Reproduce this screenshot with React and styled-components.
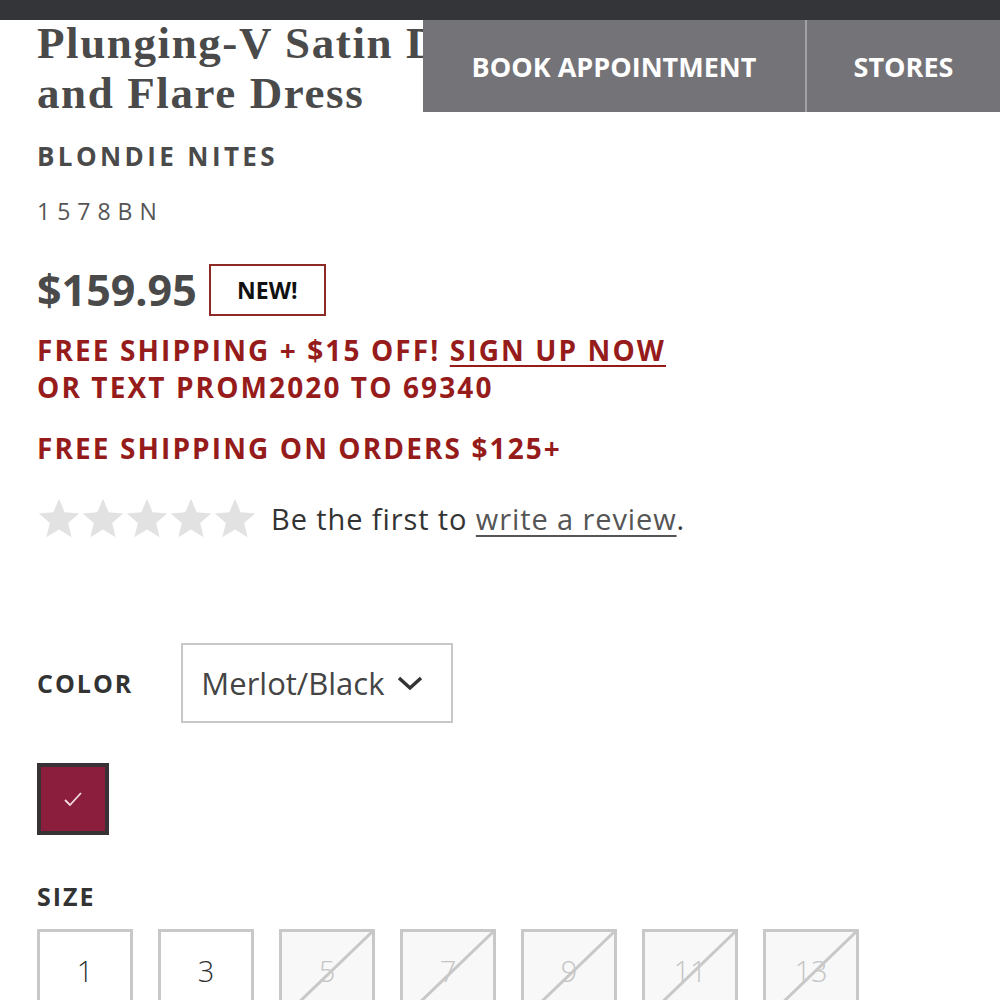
import React from 'react';
import styled, { createGlobalStyle } from 'styled-components';

const GlobalStyle = createGlobalStyle`
    html, body {
        margin: 0;
        padding: 0;
        background: #fff;
        font-family: "Open Sans", "Liberation Sans", sans-serif;
    }
    * { box-sizing: border-box; }
`;

const Page = styled.div`
    position: relative;
    width: 1000px;
    height: 1000px;
    overflow: hidden;
`;

const TopBar = styled.div`
    height: 20px;
    background: #343538;
`;

const Nav = styled.nav`
    position: absolute;
    top: 20px;
    right: 0;
    width: 577px;
    height: 92px;
    display: flex;
    background: #747378;
`;

const NavItem = styled.a`
    display: flex;
    align-items: center;
    justify-content: center;
    width: ${(p) => p.width}px;
    color: #fff;
    font-weight: 700;
    font-size: 27px;
    text-decoration: none;
    & + & {
        border-left: 2px solid #a2a1a6;
    }
`;

const Content = styled.main`
    padding: 0 37px;
`;

const Title = styled.h1`
    margin: -2px 0 0;
    font-family: "Liberation Serif", "Times New Roman", serif;
    font-weight: 700;
    font-size: 45px;
    line-height: 50px;
    color: #4a4a4a;
    letter-spacing: 1.6px;
`;

const Brand = styled.div`
    margin-top: 20px;
    font-weight: 700;
    font-size: 26px;
    letter-spacing: 3.4px;
    color: #4a4a4a;
`;

const Sku = styled.div`
    margin-top: 21px;
    font-size: 23px;
    letter-spacing: 7px;
    color: #555;
`;

const PriceRow = styled.div`
    display: flex;
    align-items: center;
    gap: 12px;
    margin-top: 33px;
`;

const Price = styled.span`
    font-weight: 700;
    font-size: 43px;
    color: #4a4a4a;
`;

const Badge = styled.span`
    display: flex;
    align-items: center;
    justify-content: center;
    width: 117px;
    height: 52px;
    border: 2px solid #8e2a26;
    font-weight: 700;
    font-size: 23px;
    color: #111;
`;

const Promo = styled.p`
    margin: ${(p) => p.top}px 0 0;
    font-weight: 700;
    font-size: 28px;
    line-height: 37px;
    letter-spacing: 2.1px;
    color: #961b1b;

    a {
        color: inherit;
        text-decoration: underline;
        text-underline-offset: 4px;
        text-decoration-thickness: 2px;
    }
`;

const ReviewRow = styled.div`
    display: flex;
    align-items: center;
    gap: 14px;
    margin-top: 29px;
`;

const Stars = styled.div`
    display: flex;
`;

const ReviewText = styled.span`
    font-size: 29px;
    letter-spacing: 0.9px;
    color: #333;

    a {
        color: #555;
        text-decoration: underline;
        text-underline-offset: 5px;
        text-decoration-thickness: 2px;
    }
`;

const OptionLabel = styled.div`
    font-weight: 700;
    font-size: 25px;
    letter-spacing: 2px;
    color: #333;
`;

const ColorRow = styled.div`
    display: flex;
    align-items: center;
    gap: 48px;
    margin-top: 103px;
`;

const Select = styled.div`
    display: flex;
    align-items: center;
    gap: 12px;
    width: 272px;
    height: 80px;
    padding-left: 18px;
    border: 2px solid #c8c8c8;
    font-size: 31px;
    color: #444;
`;

const Swatch = styled.div`
    display: flex;
    align-items: center;
    justify-content: center;
    width: 72px;
    height: 72px;
    margin-top: 40px;
    border: 4px solid #383236;
    background: ${(p) => p.color};
`;

const SizeSection = styled.div`
    margin-top: 44px;
`;

const SizeList = styled.div`
    display: flex;
    gap: 25px;
    margin-top: 16px;
`;

const SizeBox = styled.div`
    position: relative;
    display: flex;
    align-items: center;
    justify-content: center;
    width: 96px;
    height: 80px;
    border: 3px solid #c8c8c8;
    border-bottom: none;
    font-size: 29px;
    font-weight: 300;
    color: ${(p) => (p.disabled ? '#c4c4c4' : '#333')};
    background: ${(p) => (p.disabled ? '#f8f8f8' : '#fff')};
    overflow: hidden;
`;

const Slash = styled.svg`
    position: absolute;
    top: 0;
    left: 0;
    width: 100%;
    height: 100%;
`;

const Star = () => (
    <svg width="44" height="44" viewBox="0 0 24 24">
        <path d="M12 1.5l3.1 7.4 7.9.6-6 5.2 1.9 7.8L12 18.3l-6.9 4.2 1.9-7.8-6-5.2 7.9-.6z" fill="#e2e2e2" />
    </svg>
);

const sizes = [
    { label: '1' },
    { label: '3' },
    { label: '5', out: true },
    { label: '7', out: true },
    { label: '9', out: true },
    { label: '11', out: true },
    { label: '13', out: true },
];

const App = () => (
    <Page>
        <GlobalStyle />
        <TopBar />
        <Nav>
            <NavItem width={382}>BOOK APPOINTMENT</NavItem>
            <NavItem width={195}>STORES</NavItem>
        </Nav>
        <Content>
            <Title>
                Plunging-V Satin Dot Fit<br />and Flare Dress
            </Title>
            <Brand>BLONDIE NITES</Brand>
            <Sku>1578BN</Sku>
            <PriceRow>
                <Price>$159.95</Price>
                <Badge>NEW!</Badge>
            </PriceRow>
            <Promo top={13}>
                FREE SHIPPING + $15 OFF! <a href="#">SIGN UP NOW</a>
                <br />
                OR TEXT PROM2020 TO 69340
            </Promo>
            <Promo top={24}>FREE SHIPPING ON ORDERS $125+</Promo>
            <ReviewRow>
                <Stars>
                    {[0, 1, 2, 3, 4].map((i) => <Star key={i} />)}
                </Stars>
                <ReviewText>
                    Be the first to <a href="#">write a review</a>.
                </ReviewText>
            </ReviewRow>
            <ColorRow>
                <OptionLabel>COLOR</OptionLabel>
                <Select>
                    Merlot/Black
                    <svg width="28" height="20" viewBox="0 0 28 20">
                        <path d="M3 5l11 10L25 5" fill="none" stroke="#333" strokeWidth="3.5" />
                    </svg>
                </Select>
            </ColorRow>
            <Swatch color="#8a1e3c">
                <svg width="24" height="24" viewBox="0 0 24 24">
                    <path d="M4 13l5 5L20 6" fill="none" stroke="#f4dbe3" strokeWidth="1.8" />
                </svg>
            </Swatch>
            <SizeSection>
                <OptionLabel>SIZE</OptionLabel>
                <SizeList>
                    {sizes.map((s) => (
                        <SizeBox key={s.label} disabled={s.out}>
                            {s.label}
                            {s.out && (
                                <Slash viewBox="0 0 90 77" preserveAspectRatio="none">
                                    <line x1="90" y1="0" x2="10" y2="77" stroke="#c8c8c8" strokeWidth="3" />
                                </Slash>
                            )}
                        </SizeBox>
                    ))}
                </SizeList>
            </SizeSection>
        </Content>
    </Page>
);

export default App;
